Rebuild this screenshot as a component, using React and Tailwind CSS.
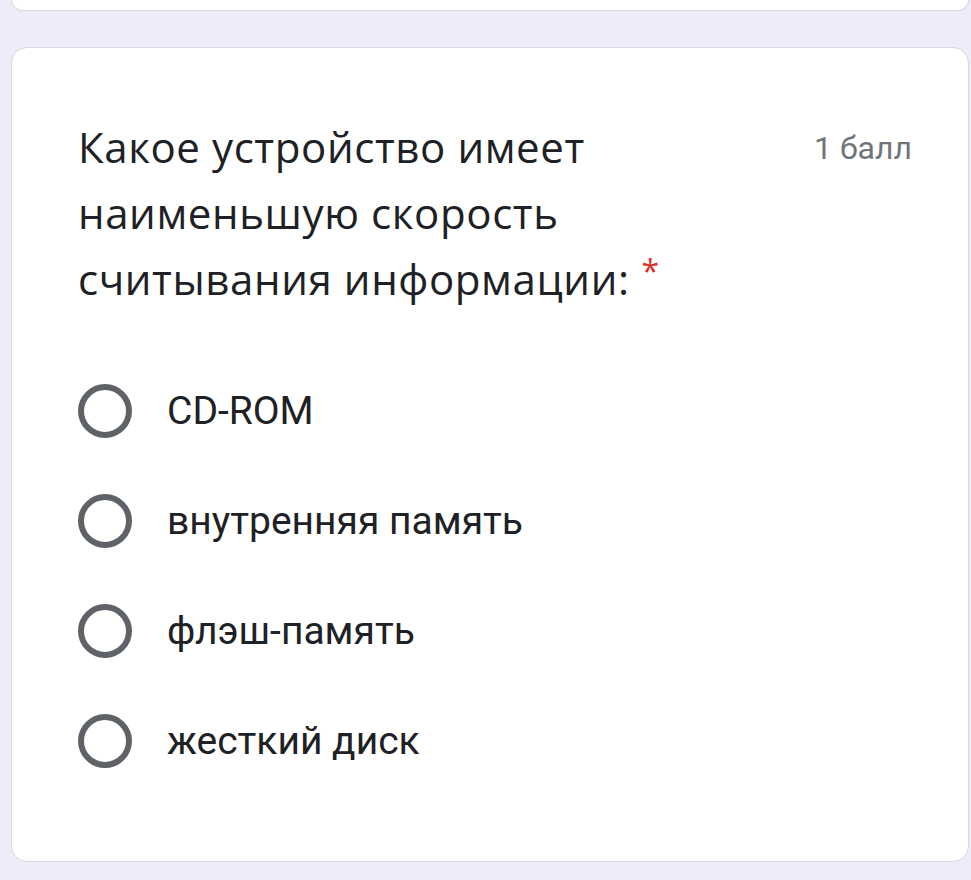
export default function App() {
  const options = ["CD-ROM", "внутренняя память", "флэш-память", "жесткий диск"];
  return (
    <div className="w-[971px] h-[880px] bg-[#efebf8] overflow-hidden pl-[11px] pr-[2px]">
      <div className="h-[11px] bg-white rounded-b-[16px] border border-t-0 border-[#d8d8de]" />
      <div className="mt-[36px] h-[815px] bg-white rounded-[16px] border-[1.5px] border-[#d8d8de] pt-[66px] pl-[66px] pr-[56px]">
        <div className="flex items-start justify-between">
          <div
            className="text-[42px] leading-[66px] tracking-[0.6px] text-[#202124] w-[620px] h-[198px]"
            style={{ fontFamily: '"Open Sans", sans-serif' }}
          >
            Какое устройство имеет наименьшую скорость считывания информации:
            <span className="text-[#d93025] text-[32px] leading-none ml-[12px] relative top-[-12px]">*</span>
          </div>
          <div
            className="text-[32px] leading-[66px] text-[#70757a] mt-[1px]"
            style={{ fontFamily: 'Roboto, sans-serif' }}
          >
            1 балл
          </div>
        </div>
        <div className="mt-[44px] flex flex-col">
          {options.map((o) => (
            <div key={o} className="h-[110px] flex items-center">
              <div className="w-[54px] h-[54px] rounded-full border-[6px] border-[#5f6368] shrink-0" />
              <div
                className="ml-[35px] text-[39px] text-[#202124]"
                style={{ fontFamily: 'Roboto, sans-serif' }}
              >
                {o}
              </div>
            </div>
          ))}
        </div>
      </div>
    </div>
  );
}
